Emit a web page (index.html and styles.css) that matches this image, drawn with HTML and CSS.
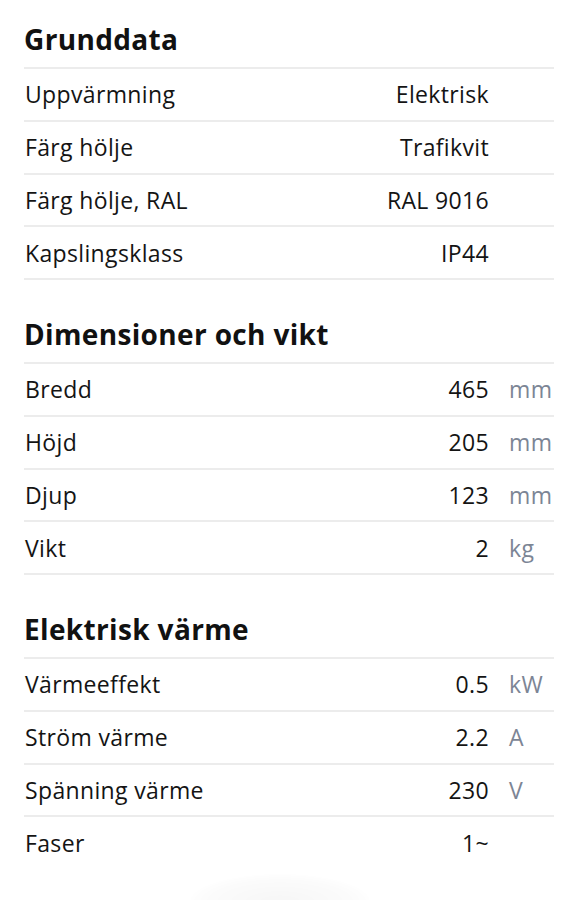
FILE: index.html
```html
<!DOCTYPE html>
<html lang="sv">
<head>
<meta charset="utf-8">
<title>Specifikationer</title>
<link rel="stylesheet" href="styles.css">
</head>
<body>
<main class="specs">
  <section class="group">
    <h2 class="group-title">Grunddata</h2>
    <div class="row"><span class="label">Uppvärmning</span><span class="value">Elektrisk</span><span class="unit"></span></div>
    <div class="row"><span class="label">Färg hölje</span><span class="value">Trafikvit</span><span class="unit"></span></div>
    <div class="row"><span class="label">Färg hölje, RAL</span><span class="value">RAL 9016</span><span class="unit"></span></div>
    <div class="row"><span class="label">Kapslingsklass</span><span class="value">IP44</span><span class="unit"></span></div>
  </section>
  <section class="group">
    <h2 class="group-title">Dimensioner och vikt</h2>
    <div class="row"><span class="label">Bredd</span><span class="value">465</span><span class="unit">mm</span></div>
    <div class="row"><span class="label">Höjd</span><span class="value">205</span><span class="unit">mm</span></div>
    <div class="row"><span class="label">Djup</span><span class="value">123</span><span class="unit">mm</span></div>
    <div class="row"><span class="label">Vikt</span><span class="value">2</span><span class="unit">kg</span></div>
  </section>
  <section class="group">
    <h2 class="group-title">Elektrisk värme</h2>
    <div class="row"><span class="label">Värmeeffekt</span><span class="value">0.5</span><span class="unit">kW</span></div>
    <div class="row"><span class="label">Ström värme</span><span class="value">2.2</span><span class="unit">A</span></div>
    <div class="row"><span class="label">Spänning värme</span><span class="value">230</span><span class="unit">V</span></div>
    <div class="row row-last"><span class="label">Faser</span><span class="value">1~</span><span class="unit"></span></div>
  </section>
</main>
<div class="fab-shadow"></div>
</body>
</html>
```
FILE: styles.css
```css
html, body {
  margin: 0;
  padding: 0;
  background: #ffffff;
}
body {
  font-family: "Open Sans", "Noto Sans", sans-serif;
  color: #141414;
  overflow: hidden;
}
.specs {
  padding: 21px 13px 0 24px;
  display: flex;
  flex-direction: column;
  gap: 36px;
}
.group {
  display: flex;
  flex-direction: column;
}
.group-title {
  margin: 0;
  font-size: 28px;
  line-height: 36px;
  font-weight: 700;
  letter-spacing: 0.35px;
  padding-bottom: 10px;
  border-bottom: 2px solid #ececec;
  color: #111;
}
.row {
  display: grid;
  grid-template-columns: 1fr auto 64px;
  align-items: center;
  height: 50.75px;
  border-bottom: 2px solid #ececec;
  font-size: 23px;
  letter-spacing: 0.35px;
}
.row-last {
  border-bottom-color: transparent;
}
.label {
  padding-left: 1px;
}
.value {
  text-align: right;
  padding-right: 1px;
}
.unit {
  padding-left: 19px;
  color: #7c8595;
}
.fab-shadow {
  position: fixed;
  left: 190px;
  bottom: -30px;
  width: 180px;
  height: 56px;
  border-radius: 50%;
  background: radial-gradient(ellipse at center, rgba(0,0,0,0.035) 0%, rgba(0,0,0,0.015) 55%, rgba(0,0,0,0) 75%);
}
```
